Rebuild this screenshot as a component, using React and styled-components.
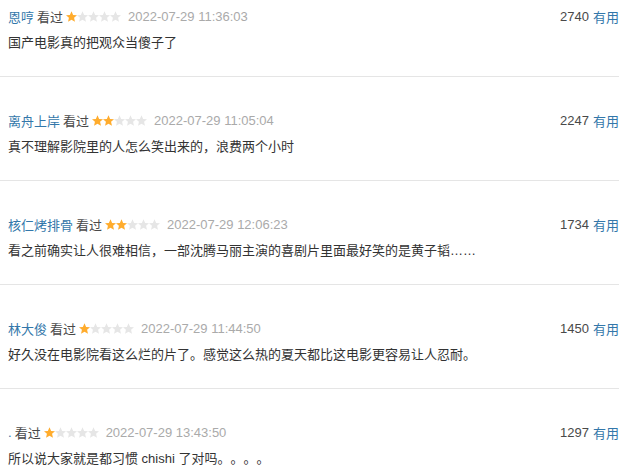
import React from 'react'
import styled, { createGlobalStyle } from 'styled-components'

const GlobalStyle = createGlobalStyle`
  html, body {
    margin: 0;
    padding: 0;
    background: #fff;
  }
  body {
    font-family: "Helvetica Neue", "Liberation Sans", "Noto Sans CJK SC", sans-serif;
    font-size: 13px;
    color: #494949;
    text-spacing-trim: space-all;
  }
`

const comments = [
  { name: '恩哼', rating: 1, time: '2022-07-29 11:36:03', votes: 2740, text: '国产电影真的把观众当傻子了' },
  { name: '离舟上岸', rating: 2, time: '2022-07-29 11:05:04', votes: 2247, text: '真不理解影院里的人怎么笑出来的，浪费两个小时' },
  { name: '核仁烤排骨', rating: 2, time: '2022-07-29 12:06:23', votes: 1734, text: '看之前确实让人很难相信，一部沈腾马丽主演的喜剧片里面最好笑的是黄子韬……' },
  { name: '林大俊', rating: 1, time: '2022-07-29 11:44:50', votes: 1450, text: '好久没在电影院看这么烂的片了。感觉这么热的夏天都比这电影更容易让人忍耐。' },
  { name: '.', rating: 1, time: '2022-07-29 13:43:50', votes: 1297, text: '所以说大家就是都习惯 chishi 了对吗。。。。' },
]

function Star ({ on }) {
  return (
    <svg width="11" height="11" viewBox="1.5 1.5 21 20">
      <path
        d="M12 1.5l3.1 7 7.4.6-5.6 4.9 1.7 7.4L12 17.5l-6.6 3.9 1.7-7.4L1.5 9.1l7.4-.6z"
        fill={on ? '#ffac2d' : '#e6e6e6'}
      />
    </svg>
  )
}

function Stars ({ value }) {
  return (
    <StarRow>
      {[1, 2, 3, 4, 5].map(i => <Star key={i} on={i <= value} />)}
    </StarRow>
  )
}

export default function App () {
  return (
    <>
      <GlobalStyle />
      <List>
        {comments.map((c, i) => (
          <Item key={i}>
            <Meta>
              <Info>
                <Name>{c.name}</Name>
                <Seen>看过</Seen>
                <Stars value={c.rating} />
                <Time>{c.time}</Time>
              </Info>
              <Vote>
                <Count>{c.votes}</Count>
                <Useful>有用</Useful>
              </Vote>
            </Meta>
            <Content>{c.text}</Content>
          </Item>
        ))}
      </List>
    </>
  )
}

const List = styled.div`
width: 619px;
`
const Item = styled.div`
padding: 33px 0 23px 8px;
border-bottom: 1px solid #e5e5e5;
&:first-child {
  padding-top: 6px;
}
`
const Meta = styled.div`
display: flex;
justify-content: space-between;
align-items: center;
height: 20px;
`
const Info = styled.div`
display: flex;
align-items: center;
`
const Name = styled.span`
color: #3377aa;
margin-right: 3px;
`
const Seen = styled.span`
color: #494949;
margin-right: 3px;
`
const StarRow = styled.span`
display: flex;
gap: 0;
margin-right: 7px;
`
const Time = styled.span`
color: #aaa;
font-size: 13px;
`
const Vote = styled.div`
display: flex;
align-items: center;
`
const Count = styled.span`
color: #494949;
margin-right: 4px;
`
const Useful = styled.span`
color: #3377aa;
`
const Content = styled.p`
margin: 7px 0 0;
line-height: 20px;
color: #333;
`
